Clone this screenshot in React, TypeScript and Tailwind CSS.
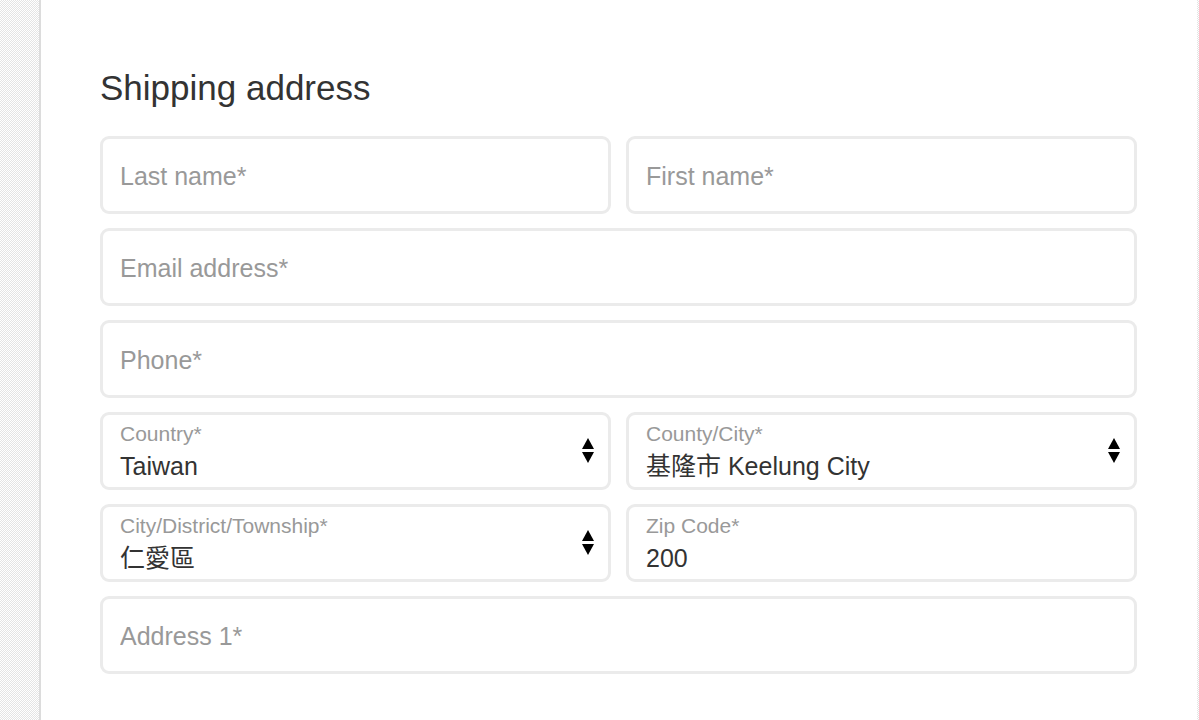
import React from 'react'

const font = { fontFamily: '"Liberation Sans", Arial, "Noto Sans CJK TC", sans-serif' }

function SelectArrows() {
  return (
    <svg width="12" height="26" viewBox="0 0 12 26" className="shrink-0">
      <polygon points="6,0 12,11 0,11" fill="#000" />
      <polygon points="0,14 12,14 6,25" fill="#000" />
    </svg>
  )
}

function TextField({ placeholder }: { placeholder: string }) {
  return (
    <div className="h-[78px] rounded-[9px] border-[3px] border-[#ebebeb] bg-white flex items-center px-[17px] pt-[3px]">
      <input
        type="text"
        placeholder={placeholder}
        className="w-full bg-transparent outline-none text-[25px] text-[#333] placeholder:text-[#999]"
      />
    </div>
  )
}

function LabeledField({ label, value, select }: { label: string; value: string; select?: boolean }) {
  return (
    <div className="h-[78px] rounded-[9px] border-[3px] border-[#ebebeb] bg-white flex items-center pl-[17px] pr-[14px]">
      <div className="flex-1 flex flex-col pt-[1px]">
        <span className="text-[21px] leading-[22px] text-[#999]">{label}</span>
        <span className="mt-[7px] text-[25px] leading-[28px] text-[#333]">{value}</span>
      </div>
      {select && <SelectArrows />}
    </div>
  )
}

export default function App() {
  return (
    <div
      className="min-h-[720px] flex bg-[repeating-conic-gradient(#e4e4e4_0_25%,#ffffff_0_50%)] bg-size-[2px_2px]"
      style={font}
    >
      <div className="ml-[39px] mr-[2px] flex-1 bg-white border-l-[2px] border-[#dcdcdc] pl-[59px] pr-[60px] pt-[68px] pb-[46px]">
        <h2 className="text-[35px] leading-[40px] text-[#333] mb-[28px]">Shipping address</h2>

        <div className="flex flex-col gap-[14px]">
          <div className="grid grid-cols-2 gap-[15px]">
            <TextField placeholder="Last name*" />
            <TextField placeholder="First name*" />
          </div>
          <TextField placeholder="Email address*" />
          <TextField placeholder="Phone*" />
          <div className="grid grid-cols-2 gap-[15px]">
            <LabeledField label="Country*" value="Taiwan" select />
            <LabeledField label="County/City*" value="基隆市 Keelung City" select />
          </div>
          <div className="grid grid-cols-2 gap-[15px]">
            <LabeledField label="City/District/Township*" value="仁愛區" select />
            <LabeledField label="Zip Code*" value="200" />
          </div>
          <TextField placeholder="Address 1*" />
        </div>
      </div>
    </div>
  )
}
